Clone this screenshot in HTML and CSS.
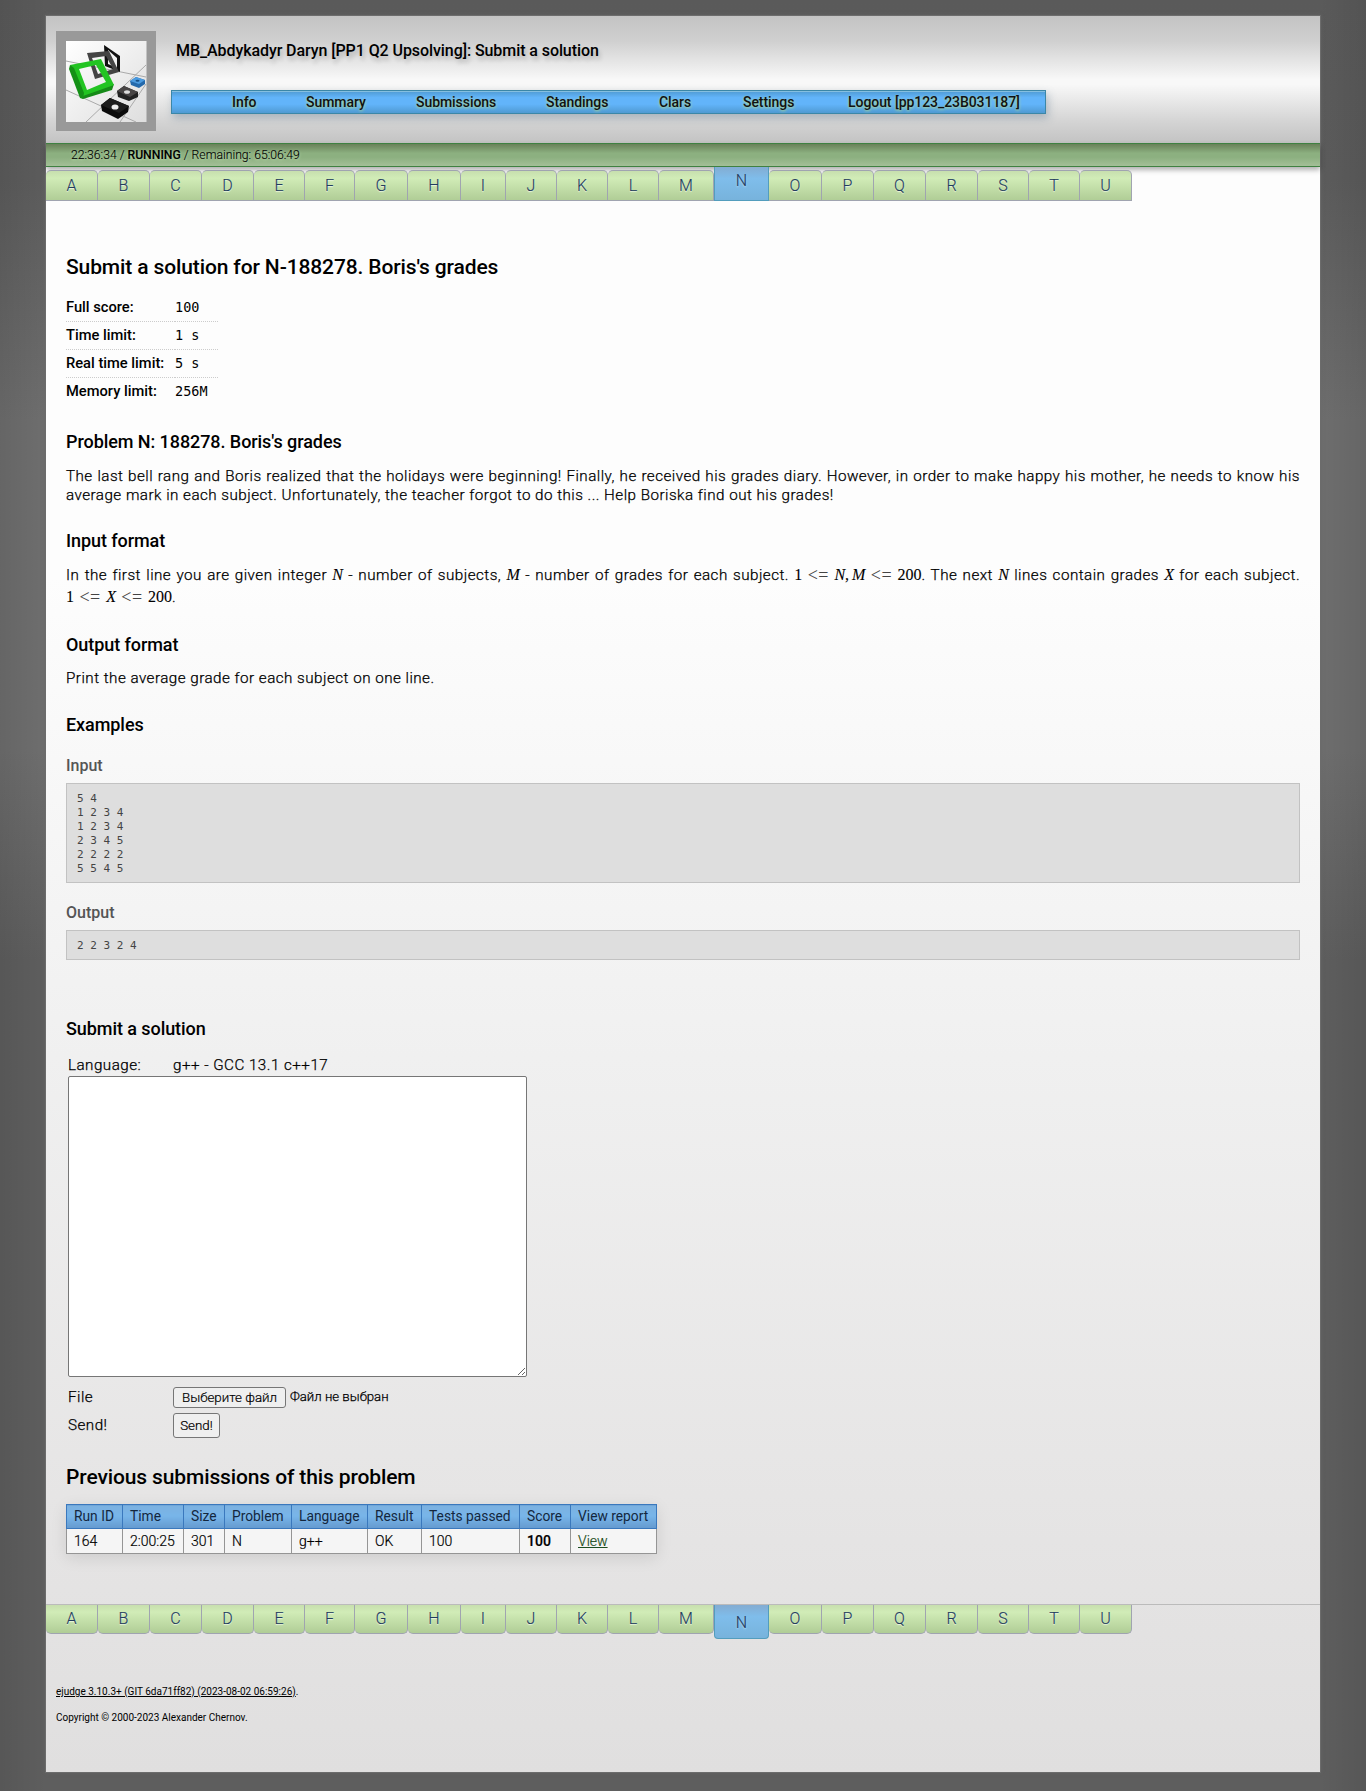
FILE: index.html
```
<!DOCTYPE html>
<html lang="en">
<head>
<meta charset="utf-8">
<title>Submit a solution</title>
<link rel="stylesheet" href="styles.css">
</head>
<body>
<div class="page">
  <header class="header">
    <svg class="logo" width="100" height="100" viewBox="0 0 100 100">
      <defs>
        <linearGradient id="floor" x1="0" y1="0" x2="1" y2="1"><stop offset="0" stop-color="#fff"/><stop offset="1" stop-color="#dedede"/></linearGradient>
      </defs>
      <rect width="100" height="100" fill="#999"/>
      <rect x="10" y="10" width="80.500" height="81" fill="url(#floor)"/>
      <path d="M10 30L90 46M10 59L80 91M30 91L90 34M64 91L90 53" fill="none" stroke="#aaa" stroke-width="1"/>
      <path d="M48 14L64 25V41L49 35ZM52 19V33L61 37V27Z" fill="#111" fill-rule="evenodd"/>
      <path d="M31 22L53 20L63 41L39 48ZM36 27L42 43L57 38L50 25Z" fill="#444" fill-rule="evenodd"/>
      <path d="M25 64L27 68L56 59L58 53Z" fill="#168a18"/>
      <path d="M14 34L45 28L58 54L27 65ZM23 38L31 59L50 51L40 34Z" fill="#22c422" fill-rule="evenodd"/>
      <path d="M14 34L13 38L24 67L27 68L28 62L18 37Z" fill="#149016"/>
      <path d="M74 50L80 46L89 49V53L83 57L75 54Z" fill="#2469ab"/>
      <path d="M74 50L80 46L89 49L83 53Z" fill="#4b9be0"/><ellipse cx="81.500" cy="49.700" rx="2" ry="1" fill="#174f86"/>
      <path d="M61 60L68 55L82 61V66L73 70L62 66Z" fill="#222"/>
      <path d="M61 60L68 55L82 61L74 66Z" fill="#484545"/><ellipse cx="71" cy="61" rx="3" ry="1.800" fill="#ddd"/>
      <path d="M45 74L54 67L73 75L72 81L62 88L46 80Z" fill="#0b0b0b"/>
      <path d="M45 74L54 67L73 75L63 82Z" fill="#1d1d1d"/><ellipse cx="59" cy="76" rx="3.500" ry="2.600" fill="#eee"/>
    </svg>
    <div class="head-main">
      <div class="title">MB_Abdykadyr Daryn [PP1 Q2 Upsolving]: Submit a solution</div>
      <nav class="menu">
        <a>Info</a><a>Summary</a><a>Submissions</a><a>Standings</a><a>Clars</a><a>Settings</a><a>Logout [pp123_23B031187]</a>
      </nav>
    </div>
  </header>
  <div class="status">22:36:34 / <b>RUNNING</b> / Remaining: 65:06:49</div>
  <nav class="tabs tabs-top">
    <a>A</a><a>B</a><a>C</a><a>D</a><a>E</a><a>F</a><a>G</a><a>H</a><a>I</a><a>J</a><a>K</a><a>L</a><a>M</a><a class="active">N</a><a>O</a><a>P</a><a>Q</a><a>R</a><a>S</a><a>T</a><a>U</a>
  </nav>
  <main class="content">
    <h2 class="first">Submit a solution for N-188278. Boris's grades</h2>
    <dl class="limits">
      <dt>Full score:</dt><dd>100</dd>
      <dt>Time limit:</dt><dd>1 s</dd>
      <dt>Real time limit:</dt><dd>5 s</dd>
      <dt>Memory limit:</dt><dd>256M</dd>
    </dl>
    <h3 class="problem">Problem N: 188278. Boris's grades</h3>
    <p class="intro">The last bell rang and Boris realized that the holidays were beginning! Finally, he received his grades diary. However, in order to make happy his mother, he needs to know his average mark in each subject. Unfortunately, the teacher forgot to do this ... Help Boriska find out his grades!</p>
    <h3>Input format</h3>
    <p class="formula">In the first line you are given integer <i>N</i> - number of subjects, <i>M</i> - number of grades for each subject. <span class="math">1 <s>&lt;=</s> <i>N</i>,<i class="next">M</i> <s>&lt;=</s> 200</span>. The next <i>N</i> lines contain grades <i>X</i> for each subject. <span class="math">1 <s>&lt;=</s> <i>X</i> <s>&lt;=</s> 200</span>.</p>
    <h3 class="wide">Output format</h3>
    <p class="output">Print the average grade for each subject on one line.</p>
    <h3>Examples</h3>
    <h4>Input</h4>
    <pre>5 4
1 2 3 4
1 2 3 4
2 3 4 5
2 2 2 2
5 5 4 5</pre>
    <h4 class="out">Output</h4>
    <pre>2 2 3 2 4</pre>
    <h3 class="submit">Submit a solution</h3>
    <form class="form">
      <div class="row lang"><span>Language:</span><span>g++ - GCC 13.1 c++17</span></div>
      <textarea></textarea>
      <div class="row"><span>File</span><span class="file"><button type="button" class="pick">Выберите файл</button><span>Файл не выбран</span></span></div>
      <div class="row"><span>Send!</span><button type="button" class="send">Send!</button></div>
    </form>
    <h2 class="previous">Previous submissions of this problem</h2>
    <table class="runs">
      <colgroup><col class="c1"><col class="c2"><col class="c3"><col class="c4"><col class="c5"><col class="c6"><col class="c7"><col class="c8"><col class="c9"></colgroup>
      <tr><th>Run ID</th><th>Time</th><th>Size</th><th>Problem</th><th>Language</th><th>Result</th><th>Tests passed</th><th>Score</th><th>View report</th></tr>
      <tr><td>164</td><td>2:00:25</td><td>301</td><td>N</td><td>g++</td><td>OK</td><td>100</td><td><b>100</b></td><td><a>View</a></td></tr>
    </table>
  </main>
  <nav class="tabs tabs-bottom">
    <a>A</a><a>B</a><a>C</a><a>D</a><a>E</a><a>F</a><a>G</a><a>H</a><a>I</a><a>J</a><a>K</a><a>L</a><a>M</a><a class="active">N</a><a>O</a><a>P</a><a>Q</a><a>R</a><a>S</a><a>T</a><a>U</a>
  </nav>
  <footer class="footer">
    <div><u>ejudge 3.10.3+ (GIT 6da71ff82) (2023-08-02 06:59:26)</u>.</div>
    <div>Copyright © 2000-2023 Alexander Chernov.</div>
  </footer>
</div>
</body>
</html>
```
FILE: styles.css
```
* { box-sizing: border-box; }
body {
  margin: 0;
  padding: 16px 46px 19px;
  font: 300 15.2px/19px Roboto, "Open Sans", sans-serif;
  color: #000;
  background: linear-gradient(90deg, rgba(0,0,0,.08), transparent 46px, transparent 1320px, rgba(0,0,0,.08)),
    linear-gradient(#5a5a5a 0, #5c5c5c 180px, #6e6e6e 420px, #6e6e6e 750px, #5e5e5e 960px, #5e5e5e 100%);
}
.page {
  height: 1756px;
  background: linear-gradient(#fdfdfd 0, #fdfdfd 560px, #f0f0f0 1040px, #e6e5e5 1480px, #e0dfdf 100%);
  box-shadow: 0 0 0 1px #6c6c6c, 0 0 4px #666;
}
.header {
  height: 127px;
  display: flex;
  padding: 15px 10px 0;
  background: linear-gradient(#c3c3c3, #d0d0d0 20%, #f8f8f8 50%, #f8f8f8 54%, #d4d4d4 83%, #c3c3c3);
}
.logo { display: block; flex: none; }
.head-main { margin-left: 15px; width: 875px; }
.title {
  height: 24px;
  margin: 8px 0 27px 5px;
  font-size: 16px;
  font-weight: 500;
  letter-spacing: -.08px;
  line-height: 24px;
  text-shadow: 2px 4px 4px rgba(0,0,0,.2);
}
.menu {
  height: 24px;
  display: grid;
  grid-template-columns: 74px 110px 130px 113px 84px 105px 1fr;
  padding-left: 60px;
  line-height: 22px;
  font-size: 14px;
  font-weight: 500;
  letter-spacing: -.06px;
  color: #111;
  background: linear-gradient(#4f9ad2, #62b4fa 30%, #62b4fa 60%, #4f9ad2);
  border: 1px solid #3b87a8;
  box-shadow: 2px 4px 8px rgba(70,100,130,.35), inset 0 1px #85bfe0;
  text-shadow: 0 1px 3px #b9e086;
}
.status {
  position: relative;
  height: 24px;
  padding-left: 25px;
  line-height: 22px;
  font-size: 12.2px;
  -webkit-text-stroke: .1px;
  background: linear-gradient(#698159, #8cb080 42%, #8cb080 60%, #a3bf97);
  border: 1px solid #3f8141;
  border-width: 1px 0;
  box-shadow: 0 3px 5px rgba(0,0,0,.3);
  text-shadow: 0 1px 3px #c5e5b4;
}
.status b, .limits dt { font-weight: 500; }
.tabs {
  display: grid;
  grid-template-columns: 52px 52px 52px 52px 51px 50px 53px 53px 45px 51px 51px 51px 55px 55px 53px 52px 52px 52px 51px 51px 52px;
  font-size: 16px;
  color: #233c5e;
  -webkit-text-stroke: .15px;
}
.tabs a {
  height: 31px;
  line-height: 30px;
  text-align: center;
  background: linear-gradient(#c7dfae, #d1ecb7 25%, #b0cd96);
  border: 1px solid #a0a4b0;
  border-left-width: 0;
  text-shadow: 0 1px 1px #eef8e4;
}
.tabs-top { position: relative; height: 34px; padding-top: 3px; }
.tabs-top a { border-radius: 5px 5px 0 0; }
.tabs .active {
  background: linear-gradient(#83acd2, #7fbdeb 35%, #77b3dc);
  border: 1px solid #539dbd;
  border-radius: 0;
  text-shadow: 0 1px 2px #b8dcf5;
}
.tabs-top .active { height: 34px; margin-top: -3px; line-height: 27px; border-top: 0; }
.content { padding: 54px 20px 50px; height: 1403px; }
h2, h3, h4 { margin: 0; font-weight: 500; }
h2 { font-size: 21px; line-height: 24px; letter-spacing: -.12px; }
h3 { font-size: 18px; line-height: 22px; margin-top: 26px; letter-spacing: -.07px; }
h3.problem { margin-top: 25px; }
h4 { margin: 20px 0 7px; font-size: 16px; line-height: 20px; color: #555; }
.limits {
  display: grid;
  grid-template-columns: 109px 43px;
  width: 152px;
  margin: 15px 0 0;
  font-size: 14.7px;
  line-height: 27px;
}
.limits dt, .limits dd { height: 28px; margin: 0; border-bottom: 1px dotted #ccc; white-space: nowrap; }
.limits dd { font: 13.5px/27px "DejaVu Sans Mono", monospace; }
.limits dt:nth-last-of-type(1), .limits dd:nth-last-of-type(1) { border: 0; }
p { margin: 13px 0 0; text-align: justify; letter-spacing: .48px; -webkit-text-stroke: .25px; }
.intro { margin: 14px 0 -1px; }
.formula { margin-top: 12px; line-height: 22px; }
.formula i, .math { font-family: "Liberation Serif", serif; font-size: 16px; font-weight: 400; letter-spacing: 0; -webkit-text-stroke: .1px; }
.math { display: inline-block; white-space: nowrap; text-align: left; word-spacing: 1.4px; line-height: 20px; }
.math .next { margin-left: 3px; }
.math s { display: inline-block; text-decoration: none; color: #444; font-size: 18px; line-height: 16px; letter-spacing: .5px; transform: translateY(1px); -webkit-text-stroke: 0; }
pre {
  margin: 0;
  padding: 8px 10px 6px;
  font: 11px/14px "DejaVu Sans Mono", monospace;
  color: #444;
  background: #dedede;
  border: 1px solid #c2c2c2;
}
h3.submit { margin-top: 58px; }
.form { margin: 14px 0 0 2px; }
.row { display: grid; grid-template-columns: 105px 1fr; height: 28px; line-height: 30px; align-items: center; letter-spacing: .48px; -webkit-text-stroke: .25px; }
.row.lang { height: 22px; line-height: 21px; }
textarea { display: block; width: 459px; height: 301px; margin: 0 0 5px; background: #fff; border: 1px solid #767676; border-radius: 2px; }
button { font: 300 13.333px/15px Roboto, sans-serif; -webkit-text-stroke: .2px; color: #000; background: #efefef; border: 1px solid #767676; border-radius: 3px; padding: 0; white-space: nowrap; }
.file { display: flex; align-items: center; gap: 4px; font-size: 13.2px; letter-spacing: 0; }
.pick { width: 113px; height: 21px; }
.send { width: 47px; height: 25px; }
h2.previous { margin-top: 27px; }
.runs {
  width: 591px;
  margin-top: 15px;
  table-layout: fixed;
  border-collapse: collapse;
  font-size: 14px;
  line-height: 20px;
  background: #f5f5f5;
  box-shadow: 0 4px 16px rgba(0,0,0,.1);
}
.runs th, .runs td { padding: 0 0 0 7px; text-align: left; white-space: nowrap; border: 1px solid #959595; }
.runs th { height: 24px; padding-bottom: 2px; font-size: 13.8px; font-weight: 400; color: #14273e; background: linear-gradient(#7cb1e0, #78b5e9 45%, #659acf); border-color: #3a78bd; }
.runs td { height: 25px; -webkit-text-stroke: .2px; }
.runs b { font-weight: 500; }
.runs a { color: #1d4d22; text-decoration: underline; }
.c1 { width: 56px; } .c2 { width: 61px; } .c3 { width: 41px; } .c4 { width: 67px; } .c5 { width: 76px; }
.c6 { width: 54px; } .c7 { width: 98px; } .c8 { width: 51px; } .c9 { width: 86px; }
.tabs-bottom { height: 36px; border-top: 1px solid #bbb; }
.tabs-bottom a { height: 29px; line-height: 28px; border-top: 0; border-radius: 0 0 5px 5px; }
.tabs-bottom .active { height: 34px; line-height: 36px; border-top: 0; border-radius: 0 0 4px 4px; }
.footer { display: grid; gap: 14px; padding: 46px 10px 0; font-size: 10px; line-height: 12px; font-weight: 400; }
```
